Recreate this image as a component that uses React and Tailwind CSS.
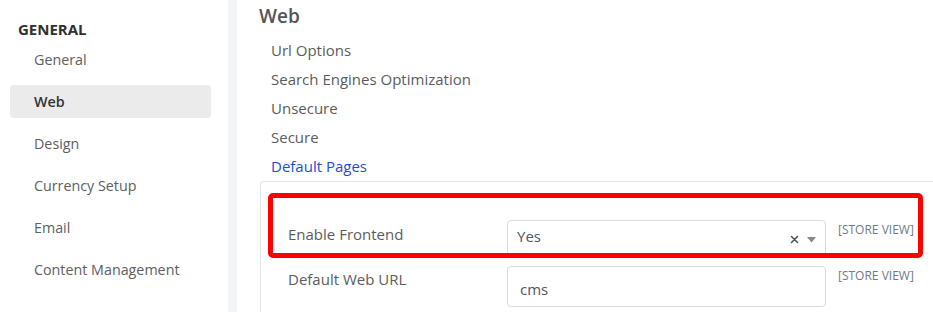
import { useState } from 'react'

const sections = ['General', 'Web', 'Design', 'Currency Setup', 'Email', 'Content Management']
const groups = ['Url Options', 'Search Engines Optimization', 'Unsecure', 'Secure', 'Default Pages']

function Sidebar({ active }) {
  return (
    <aside className="w-[228px] shrink-0 bg-white pt-[19px]">
      <div className="pl-[18px] text-[15px] leading-5 font-bold text-[#303030]">GENERAL</div>
      <ul className="mt-[4px] flex flex-col gap-[9px]">
        {sections.map((s) => (
          <li
            key={s}
            className={`ml-[10px] w-[201px] h-[33px] flex items-center pl-[24px] rounded-[4px] text-[14.3px] ${
              s === active ? 'bg-[#ebebeb] font-semibold text-[#333]' : 'text-[#606060]'
            }`}
          >
            {s}
          </li>
        ))}
      </ul>
    </aside>
  )
}

function ClearIcon() {
  return (
    <svg width="9" height="9" viewBox="0 0 9 9" className="text-[#4a5560]">
      <path d="M1.5 1.5L7.5 7.5M7.5 1.5L1.5 7.5" stroke="currentColor" strokeWidth="1.6" strokeLinecap="round" />
    </svg>
  )
}

function Caret() {
  return (
    <svg width="9" height="6" viewBox="0 0 9 6">
      <path d="M0 0H9L4.5 5.5Z" fill="#8a8a8a" />
    </svg>
  )
}

export default function App() {
  const [enabled] = useState('Yes')

  return (
    <div className="relative w-[933px] h-[312px] overflow-hidden flex bg-white font-['Open_Sans',sans-serif]">
      <Sidebar active="Web" />
      <div className="w-[9px] shrink-0 bg-[#f3f4f6]" />
      <main className="flex-1 flex flex-col bg-white">
        <h2 className="mt-[4px] pl-[22px] text-[19px] leading-[24px] font-semibold text-[#555]">Web</h2>
        <ul className="mt-2 pl-[34px]">
          {groups.map((g) => (
            <li
              key={g}
              className={`leading-[29px] text-[15px] ${g === 'Default Pages' ? 'text-[#1a50d4]' : 'text-[#5c5c5c]'}`}
            >
              {g}
            </li>
          ))}
        </ul>
        <section className="ml-[23px] flex-1 border-l border-t border-[#e4e6ea] rounded-tl-[4px] pt-[38px] pl-[27px] flex flex-col gap-[10px]">
          <div className="flex items-start">
            <label className="w-[219px] pt-[4px] text-[15px] leading-5 text-[#5c5c5c]">Enable Frontend</label>
            <div className="w-[319px] h-[36px] border border-[#d9dbde] rounded-[4px] pl-[9px] pr-[9px] pt-[5px] flex items-start">
              <span className="flex-1 text-[15px] leading-5 text-[#4f5660]">{enabled}</span>
              <span className="mt-[9px] flex items-center gap-[8px]">
                <ClearIcon />
                <Caret />
              </span>
            </div>
            <span className="ml-3 pt-[2px] text-[12px] leading-4 text-[#707a86]">[STORE VIEW]</span>
          </div>
          <div className="flex items-start">
            <label className="w-[219px] pt-[3px] text-[15px] leading-5 text-[#5c5c5c]">Default Web URL</label>
            <div className="w-[319px] h-[41px] border border-[#d9dbde] rounded-[4px] pl-[12px] pt-[10px]">
              <span className="text-[15px] leading-5 text-[#4f5660]">cms</span>
            </div>
            <span className="ml-3 pt-[2px] text-[12px] leading-4 text-[#707a86]">[STORE VIEW]</span>
          </div>
        </section>
      </main>
      <div className="absolute left-[268px] top-[193px] w-[655px] h-[65px] border-[5px] border-[#ff0000] rounded-[5px] pointer-events-none" />
    </div>
  )
}
